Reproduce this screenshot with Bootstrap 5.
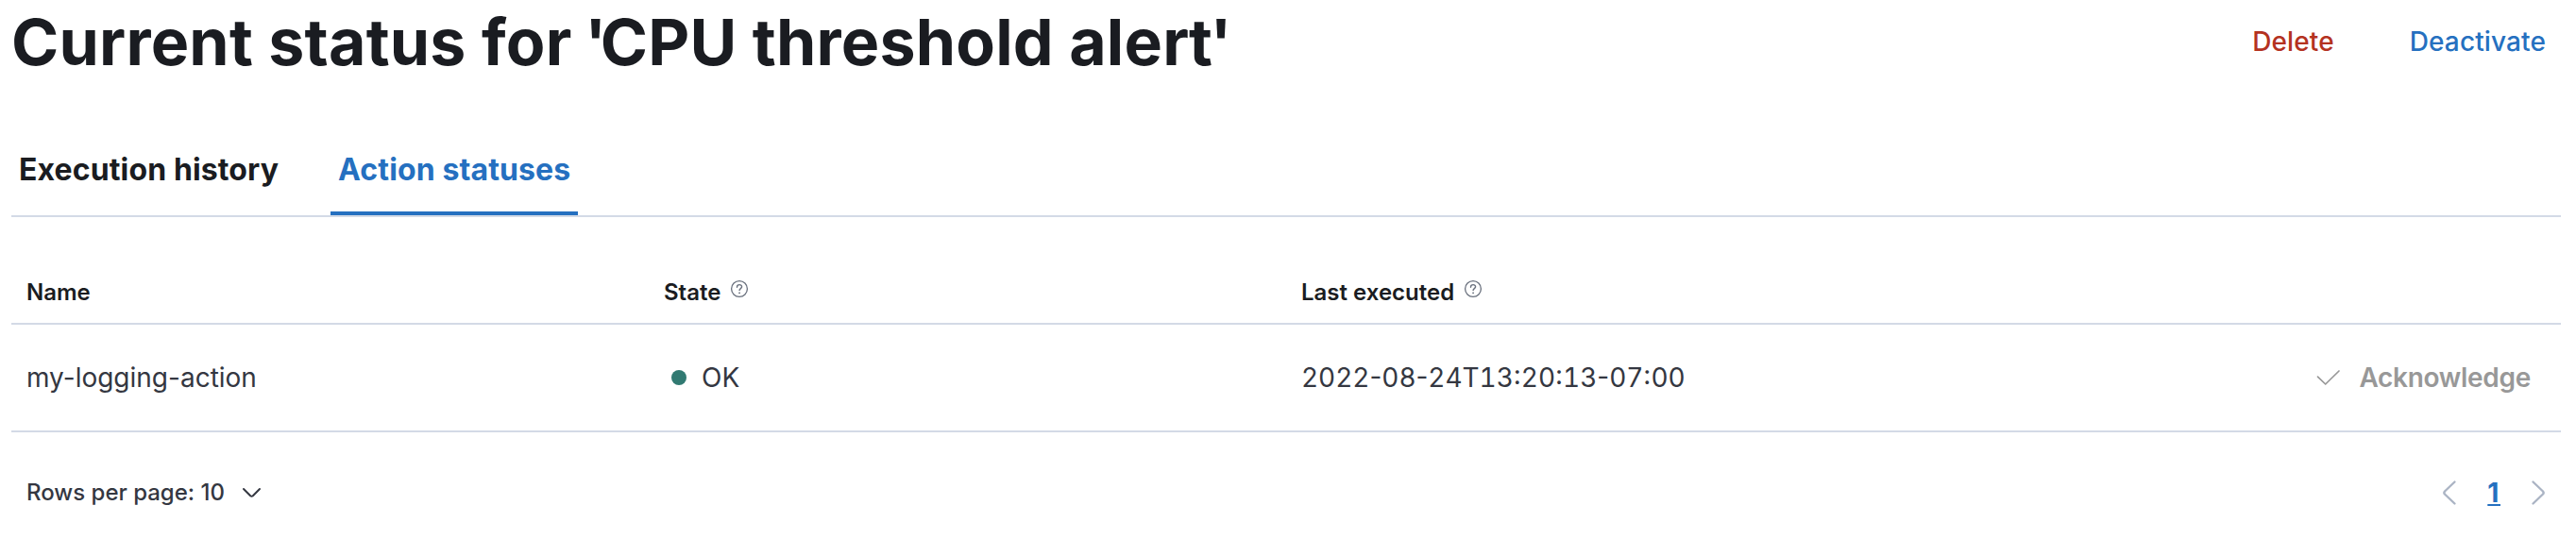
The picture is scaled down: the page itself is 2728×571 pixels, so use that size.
<!DOCTYPE html>
<html lang="en">
<head>
<meta charset="utf-8">
<meta name="viewport" content="width=device-width, initial-scale=1">
<title>Current status for 'CPU threshold alert'</title>
<link href="https://cdn.jsdelivr.net/npm/bootstrap@5.3.0/dist/css/bootstrap.min.css" rel="stylesheet">
<style>
  body { font-family: Inter, sans-serif; font-size: 28px; line-height: 40px; color: #343741; background: #fff; overflow: hidden; }
  .page { padding: 0 16px 0 12px; }
  .page-head { height: 88px; }
  .page-title { font-size: 68px; line-height: 88px; font-weight: 700; color: #1a1c21; letter-spacing: .2px; }
  .page-title .gap-tight { letter-spacing: -2.5px; }
  .page-title .quote { letter-spacing: -6.5px; }
  .btn-plain { font-size: 28px; font-weight: 500; line-height: 40px; padding: 0 16px; border: 0; }
  .btn-del { color: #b4321f; letter-spacing: .1px; }
  .btn-deact { color: #2570c0; letter-spacing: .12px; }
  .status-tabs { height: 142px; border-bottom: 2px solid #d3dae6; gap: 47px; }
  .status-tabs .nav-link { font-size: 32px; font-weight: 700; line-height: 40px; letter-spacing: .12px; color: #1a1c21; padding: 72px 8px 24px; border-bottom: 4px solid transparent; }
  .status-tabs .nav-link.active { color: #2570c0; border-bottom-color: #2570c0; }
  .status-table { table-layout: fixed; border-collapse: separate; border-spacing: 0; color: #343741; margin: 48px 0 0; }
  .status-table > :not(caption) > * > * { padding: 0 16px; border-bottom: 2px solid #d3dae6; vertical-align: middle; background: none; color: inherit; }
  .status-table > thead > tr > th { height: 66px; padding-bottom: 1px; font-size: 24px; line-height: 32px; font-weight: 600; color: #1a1c21; }
  .status-table td { height: 114px; }
  .help { color: #69707d; margin: 1px 0 0 10px; }
  .dot { width: 16px; height: 16px; border-radius: 50%; background: #317a72; margin: 0 16px 0 8px; }
  .stamp { font-variant-numeric: tabular-nums; letter-spacing: -.05px; }
  .stamp i { font-style: normal; font-variant-numeric: normal; font-feature-settings: "case"; }
  .ack { font-weight: 600; color: #989898; gap: 19px; padding-right: 16px; letter-spacing: -.3px; }
  .pager { height: 128px; padding: 0 16px; }
  .rows { font-size: 24px; font-weight: 500; }
  .pages { color: #abb4c4; gap: 32px; }
  .page-now { color: #2570c0; font-weight: 700; letter-spacing: 1.6px; text-decoration: underline; text-decoration-thickness: 2px; text-underline-offset: 2px; }
  svg { display: block; flex: none; fill: none; stroke: currentColor; stroke-linecap: round; stroke-linejoin: round; }
</style>
</head>
<body>
<main class="page">
  <header class="page-head d-flex align-items-center justify-content-between">
    <h1 class="page-title m-0">Current status for<span class="gap-tight"> </span><span class="quote">'</span>CPU threshold aler<span class="gap-tight">t</span>'</h1>
    <div class="d-flex align-items-center gap-5">
      <button class="btn btn-plain btn-del" type="button">Delete</button>
      <button class="btn btn-plain btn-deact" type="button">Deactivate</button>
    </div>
  </header>
  <nav class="nav status-tabs">
    <a class="nav-link" href="#">Execution history</a>
    <a class="nav-link active" href="#">Action statuses</a>
  </nav>
  <table class="table status-table">
    <thead>
      <tr>
        <th>Name</th>
        <th><div class="d-flex"><span>State</span><svg class="help" width="20" height="22" viewBox="0 0 20 22"><circle cx="10" cy="11" r="8.4" stroke-width="1.3"/><path d="M7.500 9.200c0-3.600 5.300-3.300 5.100-.3-.1 1.700-2.500 1.700-2.500 3.600" stroke-width="1.400"/><circle cx="10" cy="15.300" r=".5" stroke-width="1"/></svg></div></th>
        <th><div class="d-flex"><span>Last executed</span><svg class="help" width="20" height="22" viewBox="0 0 20 22"><circle cx="10" cy="11" r="8.4" stroke-width="1.3"/><path d="M7.500 9.200c0-3.600 5.300-3.300 5.100-.3-.1 1.700-2.500 1.700-2.500 3.600" stroke-width="1.400"/><circle cx="10" cy="15.300" r=".5" stroke-width="1"/></svg></div></th>
        <th></th>
      </tr>
    </thead>
    <tbody>
      <tr>
        <td>my-logging-action</td>
        <td><div class="d-flex align-items-center"><span class="dot"></span><span>OK</span></div></td>
        <td><span class="stamp">2022<i>-</i>08<i>-</i>24T13<i>:</i>20<i>:</i>13<i>-</i>07<i>:</i>00</span></td>
        <td><div class="ack d-flex align-items-center justify-content-end"><svg width="26" height="18" viewBox="0 0 26 18" stroke-width="1.700"><path d="M1.500 8.200 9.700 16 24 2"/></svg><span>Acknowledge</span></div></td>
      </tr>
    </tbody>
  </table>
  <footer class="pager d-flex align-items-center justify-content-between">
    <div class="rows d-flex align-items-center gap-3"><span>Rows per page: 10</span><svg width="24" height="12" viewBox="0 0 24 12" stroke-width="2"><path d="M4 2l7.200 7.200q1.300 1 2.600 0L21 2"/></svg></div>
    <div class="pages d-flex align-items-center">
      <svg width="16" height="28" viewBox="0 0 16 28" stroke-width="2.400"><path d="M13.500 2.500 3 12.500q-1.300 1.500 0 3L13.500 25.500"/></svg>
      <span class="page-now">1</span>
      <svg width="16" height="28" viewBox="0 0 16 28" stroke-width="2.400"><path d="M2.500 2.500 13 12.500q1.300 1.500 0 3L2.500 25.500"/></svg>
    </div>
  </footer>
</main>
<script src="https://cdn.jsdelivr.net/npm/bootstrap@5.3.0/dist/js/bootstrap.bundle.min.js"></script>
</body>
</html>
